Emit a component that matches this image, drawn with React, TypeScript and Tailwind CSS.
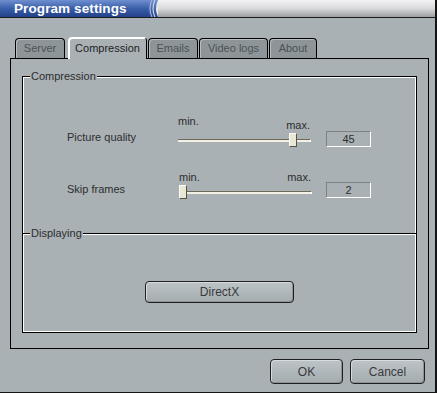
import React from "react";

interface TabProps {
    label: string;
    width: string;
    active?: boolean;
}

function Tab({ label, width, active }: TabProps) {
    if (active) {
        return (
            <div
                className={`${width} h-[22px] -mb-[1px] relative z-10 rounded-t-[4px] border-t border-l border-r border-t-white border-l-white border-r-black bg-[#a9b1b5] shadow-[inset_1px_1px_0_#ffffff] flex items-center justify-center text-[#1e1e1e]`}
            >
                {label}
            </div>
        );
    }
    return (
        <div
            className={`${width} h-[20px] mt-[1px] rounded-t-[4px] border-t border-l border-r border-black bg-[#8d9599] shadow-[inset_1px_1px_0_#b7bec2] flex items-center justify-center text-[#4c5255]`}
        >
            {label}
        </div>
    );
}

function Slider({ pos, maxLow }: { pos: number; maxLow?: boolean }) {
    return (
        <div className="w-[133px] flex flex-col">
            <div className={`flex justify-between ${maxLow ? "h-[18px]" : "h-[14px]"}`}>
                <span className="leading-[13px]">min.</span>
                <span className={`leading-[13px] mr-[1px] ${maxLow ? "mt-[4px]" : ""}`}>max.</span>
            </div>
            <div className="relative h-[14px]">
                <div className="absolute left-0 right-0 top-[6px] h-[3px] border-t border-[#6c685a] bg-[#f3f0e6] border-r border-r-white" />
                <div
                    className="absolute top-0 w-[8px] h-[14px] bg-[#ebe7d5] border-t border-l border-[#fbfaf4] border-r border-b border-r-[#55524a] border-b-[#55524a]"
                    style={{ left: pos }}
                />
            </div>
        </div>
    );
}

function ValueBox({ value, top }: { value: string; top: string }) {
    return (
        <div
            className={`${top} w-[45px] h-[16px] border-t border-l border-[#7b8286] border-r border-b border-r-white border-b-white flex items-center justify-center leading-[14px]`}
        >
            {value}
        </div>
    );
}

function Button({ label, width, height }: { label: string; width: string; height: string }) {
    return (
        <button
            className={`${width} ${height} rounded-[4px] border border-[#1f1f1f] bg-gradient-to-b from-[#bdc4c7] to-[#a4acb0] shadow-[inset_1px_1px_0_#d6dbde,inset_-1px_-1px_0_#8c9397] flex items-center justify-center text-[#3a3a3a] text-[12px]`}
        >
            {label}
        </button>
    );
}

export default function App() {
    return (
        <div
            className="w-[437px] h-[393px] bg-[#a9b1b5] border-r-2 border-b border-[#141414] flex flex-col text-[11px] text-[#2e2e2e]"
            style={{ fontFamily: '"Liberation Sans", Arial, sans-serif' }}
        >
            {/* title bar */}
            <div className="h-[18px] flex border-b border-[#1c1c1c] shrink-0">
                <div className="w-[148px] bg-gradient-to-b from-[#6f8fd0] via-[#3a5ea8] to-[#23428a] flex items-center pl-[14px]">
                    <span className="text-white font-bold text-[13.5px] leading-none tracking-[0.1px]">Program settings</span>
                </div>
                <svg width="10" height="17" viewBox="0 0 10 17" className="bg-gradient-to-b from-[#6f8fd0] to-[#23428a] shrink-0">
                    <path d="M4 0 Q0 8.5 4 17" stroke="#9fb4dc" strokeWidth="1.2" fill="none" />
                    <path d="M7 0 Q3 8.5 7 17" stroke="#c7d3ea" strokeWidth="1.2" fill="none" />
                    <path d="M10 0 Q6 8.5 10 17 L10 0" fill="#e9eaeb" />
                </svg>
                <div className="flex-1 bg-gradient-to-b from-[#f2f2f3] via-[#d9dadc] to-[#9d9fa2]" />
            </div>

            {/* tabs */}
            <div className="flex items-end gap-[1px] ml-[15px] mt-[19px]">
                <Tab label="Server" width="w-[50px]" />
                <div className="w-[1px]" />
                <Tab label="Compression" width="w-[79px]" active />
                <Tab label="Emails" width="w-[50px]" />
                <Tab label="Video logs" width="w-[69px]" />
                <Tab label="About" width="w-[48px]" />
            </div>

            {/* tab panel */}
            <div className="ml-[10px] w-[419px] h-[291px] border border-black pt-[17px] pl-[11px]">
                <div className="relative w-[395px] h-[257px] border border-black shadow-[inset_1px_1px_0_#ffffff,inset_-1px_-1px_0_#ffffff] flex flex-col">
                    <span className="absolute -top-[8px] left-[7px] px-[1px] bg-[#a9b1b5] leading-[14px]">Compression</span>

                    {/* picture quality */}
                    <div className="flex mt-[38px] pl-[44px]">
                        <div className="w-[111px] mt-[16px] leading-[13px]">Picture quality</div>
                        <Slider pos={111} maxLow />
                        <div className="w-[15px]" />
                        <ValueBox value="45" top="mt-[16px]" />
                    </div>

                    {/* skip frames */}
                    <div className="flex mt-[24px] pl-[44px]">
                        <div className="w-[112px] mt-[12px] leading-[13px]">Skip frames</div>
                        <Slider pos={0} />
                        <div className="w-[14px]" />
                        <ValueBox value="2" top="mt-[11px]" />
                    </div>

                    {/* displaying separator */}
                    <div className="relative mt-[34px] h-[2px] border-t border-black border-b border-b-white">
                        <span className="absolute -top-[8px] left-[7px] px-[1px] bg-[#a9b1b5] leading-[14px]">Displaying</span>
                    </div>

                    <div className="flex justify-center mt-[46px]">
                        <Button label="DirectX" width="w-[149px]" height="h-[22px]" />
                    </div>
                </div>
            </div>

            {/* dialog buttons */}
            <div className="flex justify-end gap-[7px] pr-[10px] mt-[10px]">
                <Button label="OK" width="w-[73px]" height="h-[25px]" />
                <Button label="Cancel" width="w-[75px]" height="h-[25px]" />
            </div>
        </div>
    );
}
